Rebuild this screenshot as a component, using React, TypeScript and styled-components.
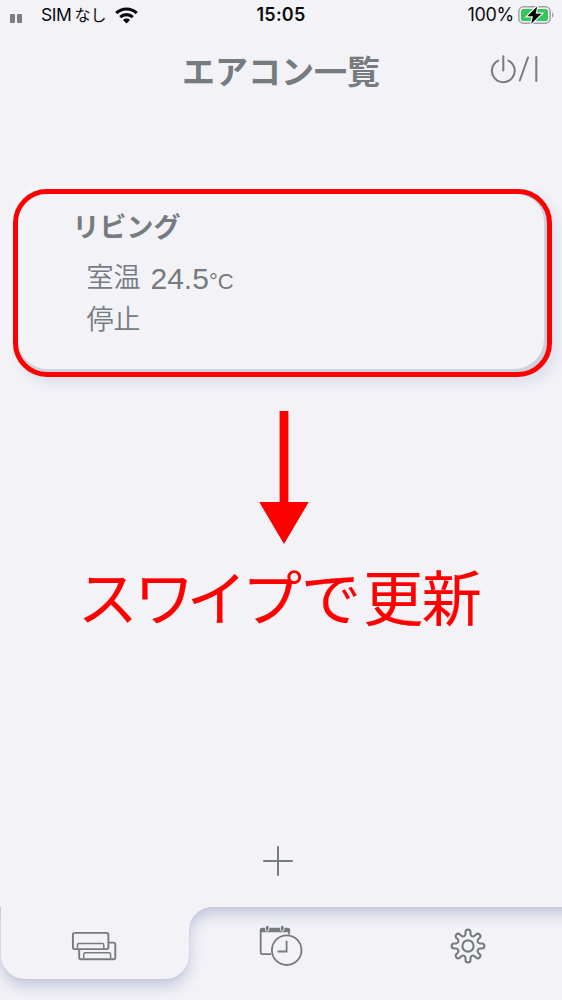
import React from 'react';
import styled, { createGlobalStyle } from 'styled-components';

const surface = '#f2f2f7';
const ink = '#757b7e';
const accent = '#ff0000';

const GlobalStyle = createGlobalStyle`
  * { box-sizing: border-box; }
  html, body { margin: 0; padding: 0; }
  body {
    background: ${surface};
    font-family: Inter, "Noto Sans CJK JP", sans-serif;
  }
  svg { display: block; }
`;

const Screen = styled.div`
  display: flex;
  flex-direction: column;
  width: 562px;
  height: 1000px;
  overflow: hidden;
  background: ${surface};
  color: ${ink};
`;

const StatusBar = styled.div`
  display: grid;
  grid-template-columns: 1fr auto 1fr;
  align-items: center;
  height: 30px;
  padding: 0 8px 0 9px;
  color: #0b0b0d;
  font-size: 17.5px;
  line-height: 30px;
`;

const StatusGroup = styled.div<{ $end?: boolean }>`
  display: flex;
  align-items: center;
  justify-content: ${(p) => (p.$end ? 'flex-end' : 'flex-start')};
  white-space: nowrap;
`;

const SignalBars = styled.div`
  display: flex;
  gap: 2px;
  margin: 6px 19px 0 1px;
`;

const SignalBar = styled.span`
  width: 5px;
  height: 9px;
  border-radius: 1px;
  background: #7d7d80;
`;

const Carrier = styled.span`
  margin-right: 9px;
  letter-spacing: -0.45px;
`;

const CarrierKana = styled.span`
  margin-left: 3px;
  font-size: 16px;
  letter-spacing: 0;
`;

const Clock = styled.span`
  margin-right: 1px;
  font-size: 18px;
  font-weight: 600;
  letter-spacing: 0.2px;
`;

const BatteryLevel = styled.span`
  margin-right: 4px;
  font-size: 18px;
  letter-spacing: -0.3px;
`;

const Header = styled.header`
  display: grid;
  grid-template-columns: 1fr auto 1fr;
  align-items: center;
  height: 84px;
  padding: 0 22px;
`;

const Title = styled.h1`
  grid-column: 2;
  margin: 0 0 4px;
  font-family: "Noto Sans CJK JP", sans-serif;
  font-size: 33px;
  font-weight: 700;
  line-height: 40px;
`;

const PowerButton = styled.div`
  grid-column: 3;
  justify-self: end;
  margin-bottom: 6px;
`;

const Content = styled.main`
  display: flex;
  flex: 1;
  flex-direction: column;
  align-items: center;
  padding-top: 75px;
`;

const Highlight = styled.section`
  width: 539px;
  height: 188px;
  margin-left: 2px;
  border: 5px solid ${accent};
  border-radius: 34px;
  padding: 0 3px 3px 0;
  background: #ccd3df;
  box-shadow: 5px 6px 12px rgba(190, 195, 214, 0.4), -3px -3px 5px rgba(255, 255, 255, 0.6);
`;

const Card = styled.div`
  width: 526px;
  height: 175px;
  padding: 12px 0 0 55px;
  border-radius: 29px 28px 30px 29px;
  background: ${surface};
  font-family: "Liberation Sans", "Noto Sans CJK JP", sans-serif;
`;

const RoomName = styled.h2`
  margin: 0 0 10px;
  font-family: "Noto Sans CJK JP", sans-serif;
  font-size: 27px;
  font-weight: 700;
  line-height: 40px;
`;

const CardRow = styled.div`
  display: flex;
  align-items: flex-start;
  height: 42px;
  padding-left: 14px;
  line-height: 40px;
`;

const Label = styled.span`
  width: 64px;
  font-family: "Noto Sans CJK JP", sans-serif;
  font-size: 27px;
  font-weight: 350;
`;

const Reading = styled.span`
  padding-top: 3px;
`;

const Temperature = styled.span`
  font-size: 30px;
`;

const Unit = styled.span`
  font-size: 22px;
`;

const Arrow = styled.svg`
  flex: none;
  margin: 34px 0 0 6px;
`;

const Caption = styled.p`
  margin: 8px 4px 0 0;
  color: ${accent};
  font-family: "Noto Sans CJK JP", sans-serif;
  font-size: 60px;
  line-height: 86px;
  white-space: nowrap;
  -webkit-text-stroke: 0.2px ${accent};
`;

const Tracked = styled.span<{ $by: number }>`
  letter-spacing: ${(p) => p.$by}px;
`;

const AddButton = styled.div`
  margin: auto 6px 31px 0;
`;

const TabBar = styled.nav`
  position: relative;
  display: grid;
  grid-template-columns: 187px 187px 188px;
  height: 93px;
  background: ${surface};
`;

const TabSurface = styled.div`
  position: absolute;
  inset: 0;
  overflow: hidden;
`;

const RaisedShape = styled.div`
  position: absolute;
  inset: 0;
  filter: drop-shadow(0 1px 1px rgba(188, 194, 214, 0.5)) drop-shadow(0 7px 7px rgba(172, 180, 208, 0.65));

  &::before {
    content: '';
    position: absolute;
    inset: -30px -30px 100%;
    background: ${surface};
  }
`;

const ActiveShape = styled.div`
  position: absolute;
  top: -2px;
  left: 1px;
  width: 188px;
  height: 74px;
  border-radius: 0 0 24px 24px;
  background: ${surface};

  &::after {
    content: '';
    position: absolute;
    top: 2px;
    left: 100%;
    width: 23px;
    height: 23px;
    background: radial-gradient(circle at 100% 100%, transparent 22.5px, ${surface} 23.2px);
  }
`;

const Tab = styled.div`
  position: relative;
  display: flex;
  justify-content: center;
`;

const teeth = 8;
const gearOutline = (() => {
  const place = (r: number, side: number, angle: number) => {
    const x = r * Math.cos(angle) - side * Math.sin(angle);
    const y = r * Math.sin(angle) + side * Math.cos(angle);
    return `${x.toFixed(2)} ${y.toFixed(2)}`;
  };
  const parts: string[] = [];
  for (let i = 0; i < teeth; i += 1) {
    const a = (i * 2 * Math.PI) / teeth;
    const next = a + (2 * Math.PI) / teeth;
    parts.push(
      `${i === 0 ? 'M' : 'L'}${place(11.9, -2.5, a)}`,
      `L${place(13.9, -2.5, a)}`,
      `A2.5 2.5 0 0 1 ${place(13.9, 2.5, a)}`,
      `L${place(11.9, 2.5, a)}`,
      `A2.5 2.5 0 0 0 ${place(11.9, -2.5, next)}`,
    );
  }
  return `${parts.join('')}Z`;
})();

const WifiIcon = () => (
  <svg width="23" height="17" viewBox="0 0 23 17" fill="none" stroke="#0b0b0d" strokeWidth="3.2">
    <path d="M1.3 6.2C7 .6 16 .6 21.7 6.2" />
    <path d="M5.2 10.1c3.6-3.4 9-3.4 12.6 0" />
    <path d="M8 12.9c2-1.8 5-1.8 7 0L11.5 16.4z" fill="#0b0b0d" stroke="none" />
  </svg>
);

const BatteryIcon = () => (
  <svg width="36" height="20" viewBox="0 0 36 20">
    <rect x=".8" y="1.8" width="31.4" height="16.4" rx="4.8" fill="none" stroke="#a1a1a5" strokeWidth="1.5" />
    <path d="M34 7.2c2 1 2 4.6 0 5.6z" fill="#a1a1a5" />
    <rect x="3" y="4" width="27" height="12" rx="2.6" fill="#35c759" />
    <path d="M19.2 1.4L9.4 11.2h5.6L13.2 18.8l10.2-10h-5.8z" fill="#000" stroke={surface} strokeWidth="2.4" paintOrder="stroke" />
  </svg>
);

const PowerIcon = () => (
  <svg width="50" height="30" viewBox="490 54 50 30" fill="none" stroke={ink} strokeWidth="2" strokeLinecap="round">
    <path d="M498.2 60.6A11.4 11.4 0 1 0 508.4 60.6M503.3 56.2V70.5M528 57.5L519.8 80.5M536.3 57V81" />
  </svg>
);

const PlusIcon = () => (
  <svg width="30" height="30" viewBox="0 0 30 30" stroke={ink} strokeWidth="2" strokeLinecap="round">
    <path d="M1 15h28M15 1v28" />
  </svg>
);

const UnitsIcon = () => (
  <svg width="46" height="30" viewBox="71 931 46 30" fill="none" stroke={ink} strokeWidth="1.9">
    <path d="M109 942.6h4.5q1.8 0 1.8 1.8v13q0 1.8-1.8 1.8H81q-1.8 0-1.8-1.8V950" />
    <rect x="72.9" y="932.9" width="35.5" height="16.2" rx="1.8" />
    <path d="M77.5 948.5V945q0-1.4 1.4-1.4h23.5q1.4 0 1.4 1.4v3.5M83.8 958.5V954.2q0-1.4 1.4-1.4h24q1.4 0 1.4 1.4v4.3" strokeWidth="1.5" />
  </svg>
);

const ScheduleIcon = () => (
  <svg width="46" height="44" viewBox="258 924 46 44" fill="none" stroke={ink} strokeWidth="1.8">
    <path d="M272 954.2H262.2q-1.5 0-1.5-1.5V929.5M289 930v5" />
    <path d="M259.8 932.2V930q0-2.2 2.2-2.2h26q2.2 0 2.2 2.2v2.2z" fill={ink} stroke="none" />
    <path d="M267.3 926.8v2.6M282.3 926.8v2.6" stroke={surface} strokeWidth="4.2" strokeLinecap="round" />
    <path d="M267.3 927v2.4M282.3 927v2.4" strokeWidth="2.6" strokeLinecap="round" />
    <circle cx="286.7" cy="950.2" r="16" fill={surface} stroke="none" />
    <circle cx="286.7" cy="950.2" r="14.8" />
    <path d="M286.6 940.7V951.5H277.5" />
  </svg>
);

const GearIcon = () => (
  <svg width="36" height="36" viewBox="-18 -18 36 36" fill="none" stroke={ink} strokeWidth="2.1">
    <path d={gearOutline} strokeLinejoin="round" />
    <circle r="5.6" />
  </svg>
);

const UnitsTab = styled(Tab)`
  padding-top: 24px;
`;

const ScheduleTab = styled(Tab)`
  padding-top: 17px;
`;

const SettingsTab = styled(Tab)`
  padding-top: 21px;
`;

export default function App() {
  return (
    <>
      <GlobalStyle />
      <Screen>
        <StatusBar>
          <StatusGroup>
            <SignalBars>
              <SignalBar />
              <SignalBar />
            </SignalBars>
            <Carrier>
              SIM<CarrierKana>なし</CarrierKana>
            </Carrier>
            <WifiIcon />
          </StatusGroup>
          <Clock>15:05</Clock>
          <StatusGroup $end>
            <BatteryLevel>100%</BatteryLevel>
            <BatteryIcon />
          </StatusGroup>
        </StatusBar>
        <Header>
          <Title>エアコン一覧</Title>
          <PowerButton>
            <PowerIcon />
          </PowerButton>
        </Header>
        <Content>
          <Highlight>
            <Card>
              <RoomName>リビング</RoomName>
              <CardRow>
                <Label>室温</Label>
                <Reading>
                  <Temperature>24.5</Temperature>
                  <Unit>°C</Unit>
                </Reading>
              </CardRow>
              <CardRow>
                <Label>停止</Label>
              </CardRow>
            </Card>
          </Highlight>
          <Arrow width="50" height="133" viewBox="0 0 50 133" fill={accent}>
            <path d="M20.6 0h8.8v91H49.8L25 133 .2 91h20.4z" />
          </Arrow>
          <Caption>
            <Tracked $by={-3.6}>ス</Tracked>
            <Tracked $by={-7.6}>ワ</Tracked>
            <Tracked $by={-4.6}>イ</Tracked>
            <Tracked $by={-1.1}>プ</Tracked>
            <Tracked $by={2.4}>で</Tracked>
            <Tracked $by={-1.6}>更新</Tracked>
          </Caption>
          <AddButton>
            <PlusIcon />
          </AddButton>
        </Content>
        <TabBar>
          <TabSurface>
            <RaisedShape>
              <ActiveShape />
            </RaisedShape>
          </TabSurface>
          <UnitsTab>
            <UnitsIcon />
          </UnitsTab>
          <ScheduleTab>
            <ScheduleIcon />
          </ScheduleTab>
          <SettingsTab>
            <GearIcon />
          </SettingsTab>
        </TabBar>
      </Screen>
    </>
  );
}
